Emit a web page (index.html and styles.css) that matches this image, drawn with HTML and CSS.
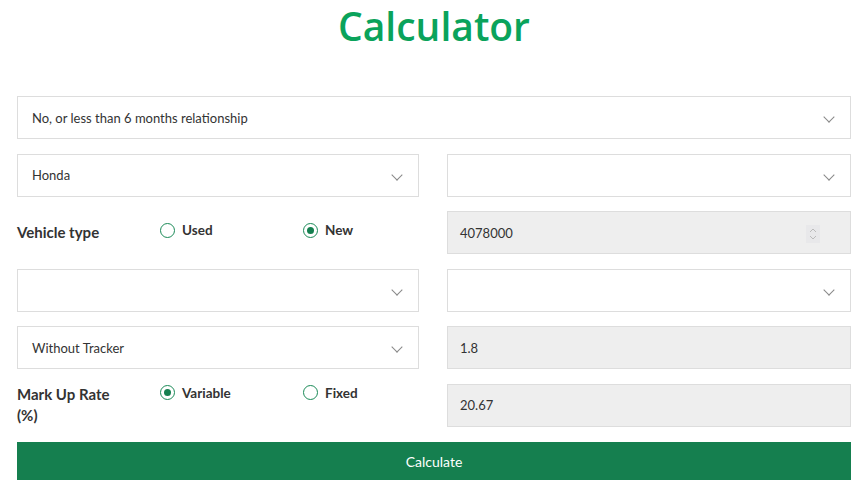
FILE: index.html
```html
<!DOCTYPE html>
<html lang="en">
<head>
    <meta charset="UTF-8">
    <meta name="viewport" content="width=device-width, initial-scale=1.0">
    <title>Calculator</title>
    <link rel="stylesheet" href="styles.css">
</head>
<body>
    <h1 class="title">Calculator</h1>
    <div class="calc">
        <div class="field full select">No, or less than 6 months relationship</div>

        <div class="field select">Honda</div>
        <div class="field select"></div>

        <div class="choice">
            <div class="label">Vehicle type</div>
            <div class="radio"><span class="dot"></span>Used</div>
            <div class="radio"><span class="dot on"></span>New</div>
        </div>
        <div class="field disabled number">4078000
            <span class="spin">
                <svg width="8" height="14" viewBox="0 0 8 14"><path d="M1 5 L4 2 L7 5 M1 9 L4 12 L7 9" fill="none" stroke="#bbb" stroke-width="1"/></svg>
            </span>
        </div>

        <div class="field select"></div>
        <div class="field select"></div>

        <div class="field select">Without Tracker</div>
        <div class="field disabled">1.8</div>

        <div class="choice raised">
            <div class="label">Mark Up Rate (%)</div>
            <div class="radio"><span class="dot on"></span>Variable</div>
            <div class="radio"><span class="dot"></span>Fixed</div>
        </div>
        <div class="field disabled">20.67</div>

        <button class="btn full">Calculate</button>
    </div>
</body>
</html>
```

FILE: styles.css
```css
body {
    margin: 0;
    font-family: Lato, "Open Sans", sans-serif;
    color: #333;
    background: #fff;
}
.title {
    margin: 0 0 44px;
    text-align: center;
    font-family: "Open Sans", Lato, sans-serif;
    font-weight: 600;
    font-size: 39px;
    line-height: 52px;
    color: #0aa35b;
    padding-left: 8px;
}
.calc {
    width: 834px;
    margin-left: 17px;
    display: grid;
    grid-template-columns: 402px 404px;
    column-gap: 28px;
    row-gap: 14.5px;
}
.full {
    grid-column: 1 / 3;
}
.field {
    height: 43px;
    box-sizing: border-box;
    border: 1px solid #ddd;
    background: #fff;
    padding: 0 14px;
    display: flex;
    align-items: center;
    font-size: 13px;
    position: relative;
}
.select::after {
    content: '';
    position: absolute;
    right: 17px;
    top: 16px;
    width: 7px;
    height: 7px;
    border-right: 1.5px solid #888;
    border-bottom: 1.5px solid #888;
    transform: rotate(45deg);
}
.disabled {
    background: #eee;
    padding-left: 12px;
}
.spin {
    position: absolute;
    right: 30px;
    top: 13px;
    width: 14px;
    height: 18px;
    display: flex;
    align-items: center;
    justify-content: center;
    background: #e8e8ea;
}
.choice {
    display: grid;
    grid-template-columns: 143px 143px 1fr;
    align-items: start;
    height: 43px;
}
.label {
    font-weight: bold;
    font-size: 15px;
    line-height: 21px;
    padding-top: 11px;
    padding-right: 30px;
}
.radio {
    display: flex;
    align-items: center;
    font-weight: bold;
    font-size: 13.5px;
    padding-top: 11px;
}
.raised .label {
    padding-top: 0;
}
.raised .radio {
    padding-top: 1px;
}
.dot {
    width: 15px;
    height: 15px;
    box-sizing: border-box;
    border: 1px solid #1a8a57;
    border-radius: 50%;
    margin-right: 7px;
    position: relative;
}
.dot.on::after {
    content: '';
    position: absolute;
    left: 3px;
    top: 3px;
    width: 7px;
    height: 7px;
    border-radius: 50%;
    background: #157f4f;
}
.btn {
    height: 38px;
    border: none;
    background: #157f4f;
    color: #fff;
    font-family: Lato, "Open Sans", sans-serif;
    font-size: 14px;
    margin-top: 1px;
}
```
